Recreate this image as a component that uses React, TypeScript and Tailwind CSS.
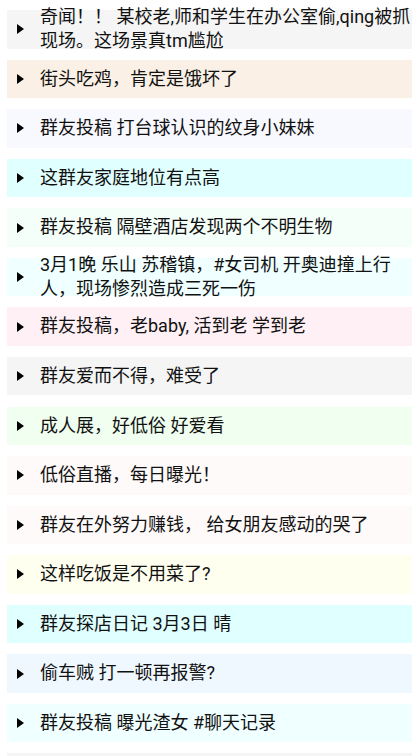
import React from "react";

const items: { lines: string[]; bg: string }[] = [
  { lines: ["奇闻！！ 某校老,师和学生在办公室偷,qing被抓", "现场。这场景真tm尴尬"], bg: "bg-[#f5f5f5]" },
  { lines: ["街头吃鸡，肯定是饿坏了"], bg: "bg-[#faf0e6]" },
  { lines: ["群友投稿 打台球认识的纹身小妹妹"], bg: "bg-[#f8f8ff]" },
  { lines: ["这群友家庭地位有点高"], bg: "bg-[#e0ffff]" },
  { lines: ["群友投稿 隔壁酒店发现两个不明生物"], bg: "bg-[#f5fffa]" },
  { lines: ["3月1晚 乐山 苏稽镇，#女司机 开奥迪撞上行", "人，现场惨烈造成三死一伤"], bg: "bg-[#f0ffff]" },
  { lines: ["群友投稿，老baby, 活到老 学到老"], bg: "bg-[#fff0f5]" },
  { lines: ["群友爱而不得，难受了"], bg: "bg-[#f5f5f5]" },
  { lines: ["成人展，好低俗 好爱看"], bg: "bg-[#f0fff0]" },
  { lines: ["低俗直播，每日曝光！"], bg: "bg-[#fffafa]" },
  { lines: ["群友在外努力赚钱， 给女朋友感动的哭了"], bg: "bg-[#fffafa]" },
  { lines: ["这样吃饭是不用菜了?"], bg: "bg-[#fffff0]" },
  { lines: ["群友探店日记 3月3日 晴"], bg: "bg-[#e0ffff]" },
  { lines: ["偷车贼 打一顿再报警?"], bg: "bg-[#f0f8ff]" },
  { lines: ["群友投稿 曝光渣女 #聊天记录"], bg: "bg-[#f0ffff]" },
  { lines: [], bg: "bg-[#f5f5f5]" },
];

export default function App() {
  return (
    <div
      className="w-[419px] h-[756px] overflow-hidden bg-white px-[7px] pt-[10px]"
      style={{ fontFamily: 'Roboto, "Noto Sans CJK SC", sans-serif' }}
    >
      <div className="flex flex-col gap-[11.07px]">
        {items.map((it, i) => (
          <div key={i} className={`${it.bg} h-[38.5px] flex items-center shrink-0`}>
            <div className="w-[33px] pl-[10px] flex items-center shrink-0">
              {it.lines.length > 0 && (
                <svg width="7" height="10" viewBox="0 0 7 10">
                  <path d="M0 0 L7 5 L0 10 Z" fill="#000" />
                </svg>
              )}
            </div>
            <div className="w-[372px] text-[18px] leading-[24.5px] text-[#111] whitespace-nowrap">
              {it.lines.map((l, j) => (
                <div key={j}>{l}</div>
              ))}
            </div>
          </div>
        ))}
      </div>
    </div>
  );
}
